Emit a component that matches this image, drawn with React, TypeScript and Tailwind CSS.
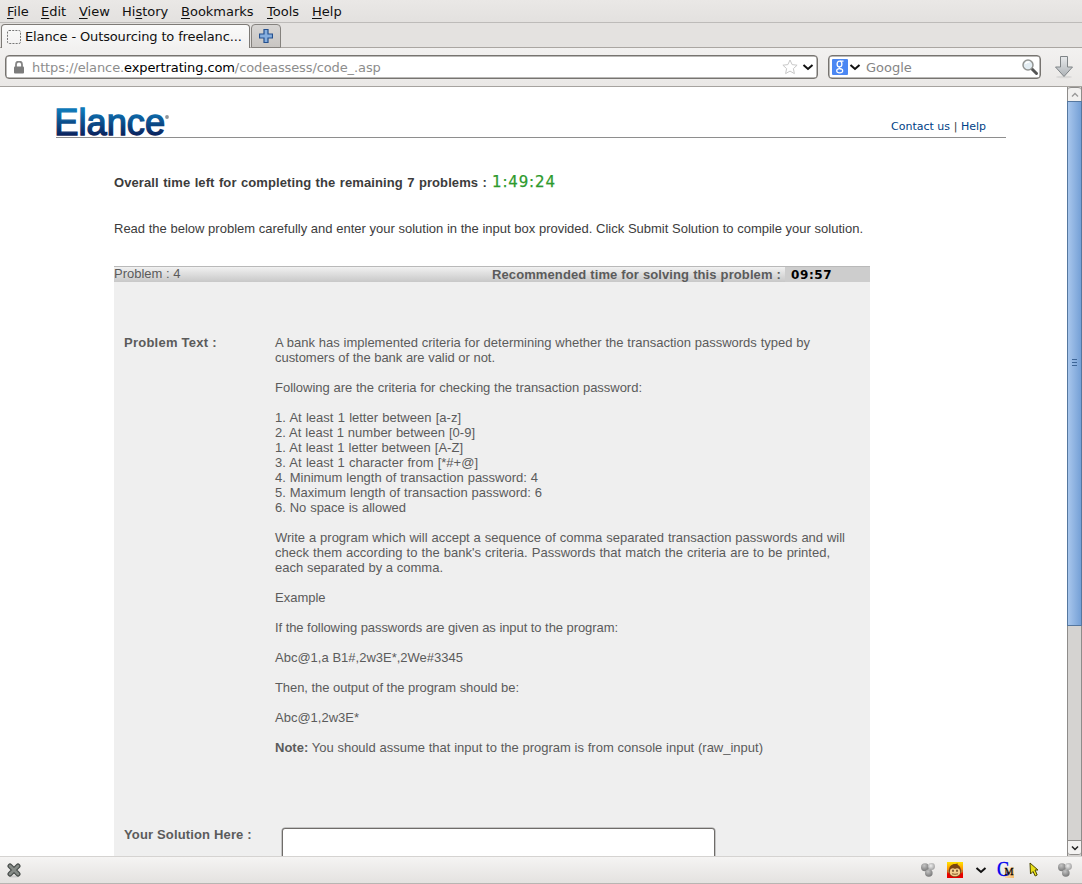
import type { ReactNode } from 'react';

const menus = [
  { key: 'F', rest: 'ile', w: 'w-[34px]' },
  { key: 'E', rest: 'dit', w: 'w-[38px]' },
  { key: 'V', rest: 'iew', w: 'w-[43px]' },
  { pre: 'Hi', key: 's', rest: 'tory', w: 'w-[59px]' },
  { key: 'B', rest: 'ookmarks', w: 'w-[86px]' },
  { key: 'T', rest: 'ools', w: 'w-[45px]' },
  { key: 'H', rest: 'elp', w: 'w-[40px]' },
];

// Each line of the statement with the width it occupies.
const lines: { t: ReactNode; w: string }[] = [
  { t: 'A bank has implemented criteria for determining whether the transaction passwords typed by', w: 'w-[535px]' },
  { t: 'customers of the bank are valid or not.', w: 'w-[220px] tracking-[-0.04px]' },
  { t: '', w: '' },
  { t: 'Following are the criteria for checking the transaction password:', w: 'w-[367px] tracking-[-0.02px]' },
  { t: '', w: '' },
  { t: '1. At least 1 letter between [a-z]', w: 'w-[186px]' },
  { t: '2. At least 1 number between [0-9]', w: 'w-[200px]' },
  { t: '1. At least 1 letter between [A-Z]', w: 'w-[188px]' },
  { t: '3. At least 1 character from [*#+@]', w: 'w-[203px]' },
  { t: '4. Minimum length of transaction password: 4', w: 'w-[263px]' },
  { t: '5. Maximum length of transaction password: 6', w: 'w-[267px]' },
  { t: '6. No space is allowed', w: 'w-[131px]' },
  { t: '', w: '' },
  { t: 'Write a program which will accept a sequence of comma separated transaction passwords and will', w: 'w-[570px]' },
  { t: "check them according to the bank's criteria. Passwords that match the criteria are to be printed,", w: 'w-[555px]' },
  { t: 'each separated by a comma.', w: 'w-[168px]' },
  { t: '', w: '' },
  { t: 'Example', w: 'w-[51px]' },
  { t: '', w: '' },
  { t: 'If the following passwords are given as input to the program:', w: 'w-[343px] tracking-[-0.07px]' },
  { t: '', w: '' },
  { t: 'Abc@1,a B1#,2w3E*,2We#3345', w: 'w-[188px]' },
  { t: '', w: '' },
  { t: 'Then, the output of the program should be:', w: 'w-[244px] tracking-[-0.07px]' },
  { t: '', w: '' },
  { t: 'Abc@1,2w3E*', w: 'w-[85px]' },
  { t: '', w: '' },
  { t: <><b>Note:</b> You should assume that input to the program is from console input (raw_input)</>, w: 'w-[488px]' },
];

function Chevron({ up = false, gray = false }: { up?: boolean; gray?: boolean }) {
  return (
    <svg width="12" height="8" viewBox="0 0 12 8" className="shrink-0">
      <path d={up ? 'M3 5.5 L6 2.5 L9 5.5' : 'M1.5 2 L6 6 L10.5 2'} fill="none" stroke={gray ? '#999' : '#111'} strokeWidth={up ? 1.3 : 2} />
    </svg>
  );
}

function Balls() {
  return (
    <svg width="16" height="16" viewBox="0 0 16 16" className="shrink-0">
      <defs>
        <radialGradient id="ball" cx=".4" cy=".3" r=".7">
          <stop offset="0" stopColor="#c4c4c4" />
          <stop offset="1" stopColor="#777" />
        </radialGradient>
        <radialGradient id="ballLight" cx=".4" cy=".4" r=".7">
          <stop offset="0" stopColor="#eee" />
          <stop offset="1" stopColor="#999" />
        </radialGradient>
      </defs>
      <circle cx="5" cy="5.2" r="4" fill="url(#ball)" />
      <circle cx="11.5" cy="4.5" r="3.4" fill="url(#ballLight)" />
      <circle cx="8.8" cy="11" r="3.8" fill="url(#ball)" />
    </svg>
  );
}

function Monkey() {
  return (
    <svg width="16" height="16" viewBox="0 0 16 16" className="shrink-0">
      <defs>
        <linearGradient id="flame" x1="0" y1="0" x2="0" y2="1">
          <stop offset="0" stopColor="#ffe500" />
          <stop offset=".5" stopColor="#ff8a00" />
          <stop offset=".75" stopColor="#e80000" />
        </linearGradient>
      </defs>
      <rect width="16" height="16" fill="url(#flame)" />
      <circle cx="1.800" cy="9" r="1.500" fill="#b87838" />
      <circle cx="14.200" cy="9" r="1.500" fill="#b87838" />
      <path d="M2 9C2 4 4.500 2 8 2L11 1.500 10.500 2.800C13 4 14 6 14 9.500C14 13.500 11.500 15 8 15S2 13.500 2 9Z" fill="#7a4512" />
      <path d="M3 9C3 6 6.500 5.500 8 7C9.500 5.500 13 6 13 9C14 12.500 11 14.300 8 14.300S2 12.500 3 9Z" fill="#f5cf90" />
      <path d="M6 7.800v2M10 7.800v2" stroke="#3a1c00" strokeWidth="1.200" />
      <path d="M5 11.800Q8 12.800 11 11.800" stroke="#6b3c10" strokeWidth=".8" fill="none" />
    </svg>
  );
}

function MenuBar() {
  return (
    <div className="flex h-[23px] shrink-0 items-center border-b border-[#bdbbb9] bg-gradient-to-b from-[#eae8e6] to-[#e3e1df] pl-[7px] pt-[2px] text-[13px] leading-[20px]">
      {menus.map((m) => (
        <span key={m.key + m.rest} className={`${m.w} whitespace-nowrap`}>
          {m.pre}
          <span className="underline underline-offset-2">{m.key}</span>
          {m.rest}
        </span>
      ))}
    </div>
  );
}

function TabBar() {
  return (
    <div className="flex h-[25px] shrink-0 items-stretch bg-[#e4e2e0] pt-px shadow-[inset_0_-1px_0_#aaa6a2]">
      <div className="ml-px flex w-[249px] items-center rounded-t-[4px] border border-b-0 border-[#7d7a76] bg-gradient-to-b from-[#fafafa] to-[#f2f1f0] pl-[5px]">
        <svg width="14" height="14" viewBox="0 0 14 14" className="shrink-0">
          <rect x=".5" y=".5" width="13" height="13" rx="1.5" fill="none" stroke="#777" strokeDasharray="2 1.2" />
        </svg>
        <span className="ml-[4px] w-[217px] whitespace-nowrap text-[13px] tracking-[-0.13px]">Elance - Outsourcing to freelanc...</span>
      </div>
      <div className="ml-px flex w-[30px] items-center justify-center rounded-t-[4px] border border-[#85827e] bg-gradient-to-b from-[#d8d6d4] to-[#c8c5c2]">
        <svg width="14" height="14" viewBox="0 0 14 14">
          <path d="M5 .5h4V5h4.5v4H9v4.500H5V9H.5V5H5z" fill="#86aede" stroke="#24508f" strokeWidth="1.2" />
        </svg>
      </div>
    </div>
  );
}

function NavBar() {
  return (
    <div className="flex h-[39px] shrink-0 items-center border-b border-[#a6a39f] bg-gradient-to-b from-[#f2f1f0] to-[#eae8e6] pl-[5px] text-[13px]">
      <div className="flex h-[24px] w-[813px] items-center rounded-[4px] border-[1.5px] border-[#777470] bg-white pl-[8px] pr-[3px] shadow-[inset_0_0_0_0.5px_#777470]">
        <svg width="10" height="13" viewBox="0 0 10 13">
          <path d="M2 6V3.500a3 3 0 0 1 6 0V6" fill="none" stroke="#858585" strokeWidth="1.8" />
          <rect y="5.500" width="10" height="7" rx="1" fill="#7c7c7c" />
        </svg>
        <span className="ml-[8px] mt-px whitespace-nowrap tracking-[-0.11px] text-[#8d8d8d]">
          https://elance.<span className="text-black">expertrating.com</span>/codeassess/code_.asp
        </span>
        <span className="flex-1" />
        <svg width="16" height="16" viewBox="0 0 16 16">
          <path d="M8 1l2.100 4.600 5 .6-3.700 3.400 1 5L8 12.100 3.600 14.600l1-5L.9 6.200l5-.6z" fill="#fff" stroke="#c8c8c8" />
        </svg>
        <span className="ml-[4px]"><Chevron /></span>
      </div>
      <div className="ml-[10px] flex h-[24px] w-[213px] items-center rounded-[4px] border-[1.5px] border-[#777470] bg-white pl-[3px] pr-px shadow-[inset_0_0_0_0.5px_#777470]">
        <span className="flex h-[16px] w-[16px] items-center justify-center rounded-[1px] bg-[#4b87f3]">
          <svg width="16" height="16" viewBox="0 0 16 16" fill="none" stroke="#fff">
            <ellipse cx="7.500" cy="5" rx="2.400" ry="2.900" strokeWidth="1.300" />
            <path d="M8 2.100h3.500M7.500 8c-1 1 .5 1.400 1.600 2" strokeWidth="1.100" />
            <ellipse cx="7.700" cy="11.700" rx="3" ry="2.100" strokeWidth="1.200" />
          </svg>
        </span>
        <span className="ml-px"><Chevron /></span>
        <span className="ml-[5px] mt-px text-[#858585]">Google</span>
        <span className="flex-1" />
        <svg width="18" height="18" viewBox="0 0 18 18">
          <path d="M10.500 10.500l5 5" stroke="#555" strokeWidth="3" strokeLinecap="round" />
          <circle cx="7" cy="7" r="5" fill="#e3edf3" stroke="#939593" strokeWidth="1.500" />
          <path d="M4.500 6a3 3 0 0 1 4-1.800" fill="none" stroke="#fff" strokeWidth="1.500" />
        </svg>
      </div>
      <svg width="20" height="24" viewBox="0 0 20 24" className="ml-[13px]">
        <defs>
          <linearGradient id="arrow" x1="0" x2="0" y1="0" y2="1">
            <stop stopColor="#e8eaec" />
            <stop offset="1" stopColor="#aeb3b7" />
          </linearGradient>
        </defs>
        <ellipse cx="10" cy="22" rx="8" ry="1.300" fill="#dad9d8" />
        <path d="M6.500 1.500h7V12H18.500L10 21.500 1.500 12H6.500z" fill="url(#arrow)" stroke="#7f8487" />
      </svg>
    </div>
  );
}

function Page() {
  return (
    <main className="min-w-0 flex-1 overflow-hidden bg-white font-['Liberation_Sans',sans-serif] text-[13px] leading-[15px] text-[#3c3c3c]">
      <header className="ml-[56px] flex h-[51px] w-[950px] items-end justify-between border-b border-[#8e8e8e]">
        <svg width="119" height="42" viewBox="0 -8 119 42" className="-ml-[3px] shrink-0 overflow-visible">
          <defs>
            <linearGradient id="logo" x1="0" x2="0" y1="0" y2="1">
              <stop offset=".2" stopColor="#0d78b8" />
              <stop offset=".85" stopColor="#091d58" />
            </linearGradient>
          </defs>
          <text x="1.200" y="32" textLength="111" lengthAdjust="spacingAndGlyphs" fontFamily="Liberation Sans" fontSize="36" fill="url(#logo)" stroke="url(#logo)" strokeWidth="1.300">Elance</text>
          <circle cx="114" cy="14" r="1.900" fill="#8f9499" />
        </svg>
        <div className="mb-[3px] mr-[20px] w-[95px] whitespace-nowrap font-['DejaVu_Sans',sans-serif] text-[11px] [text-align-last:justify]">
          <span className="text-[#003f86]">Contact us</span> | <span className="text-[#003f86]">Help</span>
        </div>
      </header>
      <section className="ml-[114px] w-[756px]">
        <div className="mt-[37px] flex h-[15px] items-center">
          <b className="-mt-px w-[373px] whitespace-nowrap tracking-[0.1px] [text-align-last:justify]">Overall time left for completing the remaining 7 problems :</b>
          <span className="ml-[5px] font-['DejaVu_Sans',sans-serif] text-[15px] tracking-[0.85px] text-[#2d9a2d] [-webkit-text-stroke:0.25px_#2d9a2d]">1:49:24</span>
        </div>
        <p className="mt-[31px] w-[749px] whitespace-nowrap [text-align-last:justify]">Read the below problem carefully and enter your solution in the input box provided. Click Submit Solution to compile your solution.</p>
        <div className="mt-[30px] flex h-[16px] items-center border-t border-[#b9b9b9] bg-gradient-to-b from-[#f1f1f1] to-[#c8c8c8] text-[#5b5b5b]">
          <span className="-mt-[2px] w-[378px]">Problem : 4</span>
          <b className="w-[289px] whitespace-nowrap tracking-[0.1px] [text-align-last:justify]">Recommended time for solving this problem :</b>
          <span className="ml-[4px] flex h-full flex-1 items-center bg-[#cdcdcd] pl-[6px] pt-px font-['DejaVu_Sans',sans-serif] text-[12px] font-bold tracking-[0.6px] text-black">09:57</span>
        </div>
        <div className="h-[600px] bg-[#efefef] pt-[53px] text-[#5b5b5b]">
          <div className="flex h-[492px]">
            <b className="ml-[10px] w-[151px] tracking-[0.25px]">Problem Text :</b>
            <div>
              {lines.map((l, i) => (
                <p key={i} className={`h-[15px] whitespace-nowrap [text-align-last:justify] ${l.w}`}>{l.t}</p>
              ))}
            </div>
          </div>
          <div className="flex">
            <b className="ml-[10px] w-[158px] tracking-[0.15px]">Your Solution Here :</b>
            <div className="mt-px h-[100px] w-[433px] rounded-[3px] border border-[#6f6c69] bg-white shadow-[0_0_0_0.5px_#999]" />
          </div>
        </div>
      </section>
    </main>
  );
}

function Scrollbar() {
  return (
    <div className="flex w-[15px] shrink-0 flex-col border-x border-[#8e8c8a] bg-[#d5d3d1]">
      <div className="flex h-[14px] shrink-0 items-center justify-center rounded-t-[3px] border-t border-[#8e8c8a] bg-[#f1f0ef]"><Chevron up gray /></div>
      <div className="-mx-px flex h-[525px] shrink-0 flex-col items-center justify-center gap-[2px] border border-[#55779f] bg-gradient-to-r from-[#a8c6ec] to-[#75a0d6] pb-[3px]">
        <i className="h-px w-[5px] bg-[#3d6597]" />
        <i className="h-px w-[5px] bg-[#3d6597]" />
        <i className="h-px w-[5px] bg-[#3d6597]" />
      </div>
      <div className="flex-1" />
      <div className="mb-px flex h-[15px] items-center justify-center rounded-b-[3px] border-y border-[#8e8c8a] bg-[#f3f2f1]">
        <svg width="8" height="6" viewBox="0 0 8 6"><path d="M1 1.500L4 4.500L7 1.500" fill="none" stroke="#222" strokeWidth="1.500" /></svg>
      </div>
    </div>
  );
}

function StatusBar() {
  return (
    <div className="flex h-[28px] shrink-0 items-center border-y border-b-[#b8b5b2] border-t-[#d5d3d1] bg-gradient-to-b from-[#f5f4f3] to-[#e4e2e0] pl-[7px] pr-[9px]">
      <svg width="14" height="15" viewBox="0 0 14 15">
        <ellipse cx="7" cy="13.500" rx="5" ry="1" fill="#ccc" />
        <path d="M3 3l8 8M11 3l-8 8" stroke="#454a48" strokeWidth="5" strokeLinecap="round" />
        <path d="M3 3l8 8M11 3l-8 8" stroke="#858a86" strokeWidth="2.800" strokeLinecap="round" />
      </svg>
      <span className="flex-1" />
      <Balls />
      <span className="ml-[11px]"><Monkey /></span>
      <span className="ml-[12px] flex"><Chevron /></span>
      <svg width="18" height="16" viewBox="0 0 18 16" className="ml-[10px] overflow-visible">
        <defs>
          <linearGradient id="peach" x1="0" y1="0" x2="1" y2="1">
            <stop offset=".2" stopColor="#fbe8cf" />
            <stop offset="1" stopColor="#f7b860" />
          </linearGradient>
        </defs>
        <rect x="8" y="5" width="9" height="11" fill="url(#peach)" />
        <text x="0" y="14" fontFamily="Liberation Serif" fontSize="20" textLength="12" lengthAdjust="spacingAndGlyphs" fill="#0000ee" stroke="#0000ee" strokeWidth=".4">C</text>
        <text x="7.500" y="13" fontFamily="Liberation Serif" fontSize="11" textLength="9" lengthAdjust="spacingAndGlyphs" stroke="#000" strokeWidth=".3">M</text>
      </svg>
      <svg width="10" height="16" viewBox="0 0 10 16" className="ml-[14px]">
        <path d="M1 1l8 7H6l2.200 5-2 1L4 9.500 1.500 12z" fill="#e8df16" stroke="#4b4700" />
      </svg>
      <span className="ml-[18px]"><Balls /></span>
    </div>
  );
}

export default function App() {
  return (
    <div className="flex h-[884px] w-[1082px] flex-col overflow-hidden bg-white font-['DejaVu_Sans',sans-serif] text-[#111]">
      <MenuBar />
      <TabBar />
      <NavBar />
      <div className="flex min-h-0 flex-1">
        <Page />
        <Scrollbar />
      </div>
      <StatusBar />
    </div>
  );
}
